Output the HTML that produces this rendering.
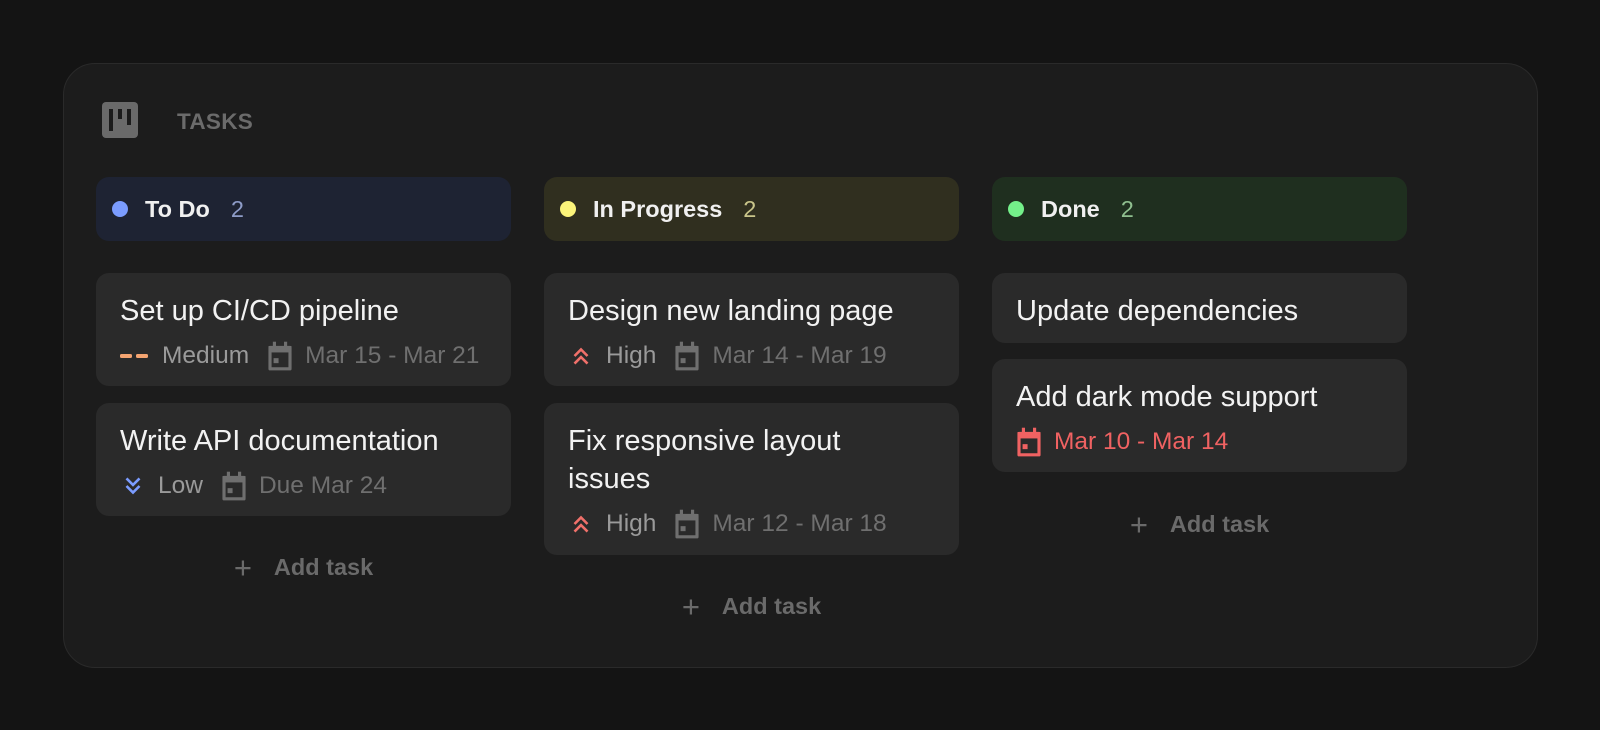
<!DOCTYPE html>
<html><head><meta charset="utf-8"><style>
*{box-sizing:border-box;margin:0;padding:0}
body{width:1600px;height:730px;background:#141414;font-family:"Liberation Sans",sans-serif;position:relative;overflow:hidden}
.panel{position:absolute;left:63px;top:63px;width:1475px;height:605px;background:#1c1c1c;border:1px solid #2a2a2a;border-radius:32px}
.logo{position:absolute;left:102px;top:102px;width:36px;height:36px;background:#6a6a6a;border-radius:4px}
.logo i{position:absolute;background:#1c1c1c;width:4px}
.title{position:absolute;left:177px;top:109px;font-size:22.5px;font-weight:bold;color:#6b6b6b;letter-spacing:.3px}
.hdr{position:absolute;top:177px;width:415px;height:64px;border-radius:13px;display:flex;align-items:center;padding-left:16px;font-size:23.5px}
.hdr .dot{width:16px;height:16px;border-radius:50%;margin-right:17px}
.hdr b{color:#f0f0f0;margin-right:21px}
.card{position:absolute;width:415px;background:#2a2a2a;border-radius:13px;padding:19px 24px 0 24px}
.card h3{font-weight:normal;font-size:29px;color:#f2f2f2;line-height:38px}
.meta{display:flex;align-items:center;font-size:24.5px;color:#9a9a9a;margin-top:11px;height:30px}
.meta .dt{color:#6f6f6f}
.meta svg{margin-right:12px}
.add{position:absolute;width:415px;text-align:center;font-size:23.5px;font-weight:bold;color:#6a6a6a}
.add span{font-weight:normal;font-size:31px;margin-right:22px;vertical-align:-3px}
</style></head><body>
<div class="panel"></div>
<div class="logo"><i style="left:7px;top:7px;height:22px"></i><i style="left:16px;top:7px;height:10px"></i><i style="left:25px;top:7px;height:16px"></i></div>
<div class="title">TASKS</div>

<div class="hdr" style="left:96px;background:#1e2333"><div class="dot" style="background:#7b9cff"></div><b>To Do</b><span style="color:#8e9cc8">2</span></div>
<div class="hdr" style="left:544px;background:#302f1f"><div class="dot" style="background:#fbf47a"></div><b>In Progress</b><span style="color:#c9c58a">2</span></div>
<div class="hdr" style="left:992px;background:#1f2f1f"><div class="dot" style="background:#74f08a"></div><b>Done</b><span style="color:#8fbf8f">2</span></div>

<svg width="0" height="0" style="position:absolute"><defs>
<symbol id="cal" viewBox="3 1 18 21"><path d="M5 5.5h14v15H5z" fill="none" stroke="currentColor" stroke-width="2.2" stroke-linejoin="round"/><rect x="4" y="4.5" width="16" height="4.5" fill="currentColor"/><rect x="7" y="1.5" width="2.2" height="4" fill="currentColor"/><rect x="14.8" y="1.5" width="2.2" height="4" fill="currentColor"/><rect x="7.5" y="13" width="3.5" height="3.5" fill="currentColor"/></symbol>
<symbol id="up" viewBox="0 0 24 24"><path d="M6 12l6-6 6 6M6 19l6-6 6 6" fill="none" stroke="currentColor" stroke-width="2.4"/></symbol>
<symbol id="down" viewBox="0 0 24 24"><path d="M6 5l6 6 6-6M6 12l6 6 6-6" fill="none" stroke="currentColor" stroke-width="2.4"/></symbol>
</defs></svg>

<!-- col1 -->
<div class="card" style="left:96px;top:273px;height:113px"><h3>Set up CI/CD pipeline</h3>
<div class="meta"><svg width="30" height="24" style="color:#f4a471"><rect x="0" y="10" width="12" height="4" rx="1.5" fill="currentColor"/><rect x="16" y="10" width="12" height="4" rx="1.5" fill="currentColor"/></svg>Medium<svg width="26" height="30" style="color:#6f6f6f;margin-left:18px"><use href="#cal"/></svg><span class="dt">Mar 15 - Mar 21</span></div></div>
<div class="card" style="left:96px;top:403px;height:113px"><h3>Write API documentation</h3>
<div class="meta"><svg width="26" height="26" style="color:#7b9cff"><use href="#down"/></svg>Low<svg width="26" height="30" style="color:#6f6f6f;margin-left:18px"><use href="#cal"/></svg><span class="dt">Due Mar 24</span></div></div>
<div class="add" style="left:96px;top:550px"><span>+</span>Add task</div>

<!-- col2 -->
<div class="card" style="left:544px;top:273px;height:113px"><h3>Design new landing page</h3>
<div class="meta"><svg width="26" height="26" style="color:#f0706a"><use href="#up"/></svg>High<svg width="26" height="30" style="color:#6f6f6f;margin-left:18px"><use href="#cal"/></svg><span class="dt">Mar 14 - Mar 19</span></div></div>
<div class="card" style="left:544px;top:403px;height:152px"><h3>Fix responsive layout<br>issues</h3>
<div class="meta"><svg width="26" height="26" style="color:#f0706a"><use href="#up"/></svg>High<svg width="26" height="30" style="color:#6f6f6f;margin-left:18px"><use href="#cal"/></svg><span class="dt">Mar 12 - Mar 18</span></div></div>
<div class="add" style="left:544px;top:589px"><span>+</span>Add task</div>

<!-- col3 -->
<div class="card" style="left:992px;top:273px;height:70px"><h3>Update dependencies</h3></div>
<div class="card" style="left:992px;top:359px;height:113px"><h3>Add dark mode support</h3>
<div class="meta"><svg width="26" height="30" style="color:#f06262"><use href="#cal"/></svg><span style="color:#f06262">Mar 10 - Mar 14</span></div></div>
<div class="add" style="left:992px;top:507px"><span>+</span>Add task</div>
</body></html>
